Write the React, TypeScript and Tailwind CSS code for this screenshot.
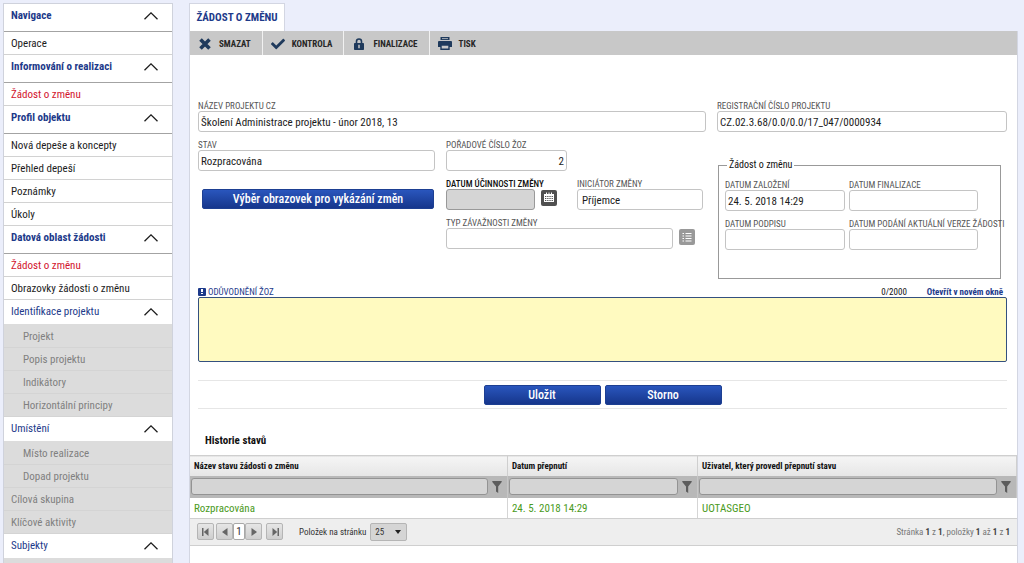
import { clsx } from "clsx"
import type { InputHTMLAttributes, ReactNode } from "react"
import { FaCheck } from "react-icons/fa"

type NavKind = "section" | "group" | "item" | "active" | "disabled" | "nested"

const navigation: { label: string; kind: NavKind }[] = [
  { label: "Navigace", kind: "section" },
  { label: "Operace", kind: "item" },
  { label: "Informování o realizaci", kind: "section" },
  { label: "Žádost o změnu", kind: "active" },
  { label: "Profil objektu", kind: "section" },
  { label: "Nová depeše a koncepty", kind: "item" },
  { label: "Přehled depeší", kind: "item" },
  { label: "Poznámky", kind: "item" },
  { label: "Úkoly", kind: "item" },
  { label: "Datová oblast žádosti", kind: "section" },
  { label: "Žádost o změnu", kind: "active" },
  { label: "Obrazovky žádosti o změnu", kind: "item" },
  { label: "Identifikace projektu", kind: "group" },
  { label: "Projekt", kind: "nested" },
  { label: "Popis projektu", kind: "nested" },
  { label: "Indikátory", kind: "nested" },
  { label: "Horizontální principy", kind: "nested" },
  { label: "Umístění", kind: "group" },
  { label: "Místo realizace", kind: "nested" },
  { label: "Dopad projektu", kind: "nested" },
  { label: "Cílová skupina", kind: "disabled" },
  { label: "Klíčové aktivity", kind: "disabled" },
  { label: "Subjekty", kind: "group" }
]

const navStyles: Record<NavKind, string> = {
  section: "h-7 border-[#a3a3a3] pt-px pb-1 font-bold text-[#1d3a8a]",
  group: "h-[25px] border-[#dcdcdc] text-[#1d3a8a]",
  item: "h-[23px] border-[#d2d2d2] pt-px text-[#1c1c1c]",
  active: "h-[23px] border-[#d2d2d2] pt-px text-[#d2142d]",
  disabled: "h-[23px] border-[#d4d4d4] bg-[#dcdcdc] pt-px text-[#808080]",
  nested: "h-[23px] border-[#d4d4d4] bg-[#dcdcdc] pt-px pl-[19px] text-[#808080]"
}

function Sidebar() {
  return (
    <nav className="flex w-[170px] shrink-0 flex-col border-x border-t border-[#cfd2dc] bg-white">
      {navigation.map((entry, i) => {
        const className = clsx("flex w-full items-center justify-between border-b pr-3.5 text-left", entry.kind !== "nested" && "pl-[7px]", navStyles[entry.kind])

        if (entry.kind === "section" || entry.kind === "group") {
          return (
            <button key={i} type="button" className={className}>
              {entry.label}
              <svg viewBox="0 0 14 8" className="h-2 w-3.5" fill="none" stroke="#1c1c1c" strokeWidth="1.3">
                <path d="M.5 7.3 7 .9l6.5 6.4" />
              </svg>
            </button>
          )
        }

        return <a key={i} href="#" className={className}>{entry.label}</a>
      })}
      <div className="flex-1 bg-[#dcdcdc]" />
    </nav>
  )
}

function ToolbarButton({ icon, children }: { icon: ReactNode; children: ReactNode }) {
  return (
    <button type="button" className="flex h-full items-center gap-[7px] border-r border-[#f1f1f1] pt-px pr-[11px] pl-2 text-[9px] font-bold text-[#262626] last:border-r-0">
      <span className="flex w-3.5 justify-center text-sm text-[#1f3a5c]">{icon}</span>
      {children}
    </button>
  )
}

function CrossIcon() {
  return (
    <svg viewBox="0 0 12 12" className="h-3 w-3" stroke="currentColor" strokeWidth="3.6">
      <path d="M1.5 1.5l9 9M10.5 1.5l-9 9" />
    </svg>
  )
}

function LockIcon() {
  return (
    <svg viewBox="0 0 10 12" className="h-3 w-2.5">
      <path d="M2.500 6V3.500a2.500 2.500 0 0 1 5 0V6" fill="none" stroke="currentColor" strokeWidth="1.600" />
      <rect y="5" width="10" height="7" rx=".8" fill="currentColor" />
      <path d="M5 6.700v3.600" stroke="#c8c8c8" strokeWidth="1.500" />
    </svg>
  )
}

function PrinterIcon() {
  return (
    <svg viewBox="0 0 14 13" className="h-[13px] w-3.5">
      <path d="M2.500 0h9v3h-9z" fill="currentColor" />
      <path d="M4 1.600h6" stroke="#c8c8c8" strokeWidth=".8" />
      <path d="M1 4h12a1 1 0 0 1 1 1v5h-3V8H3v2H0V5a1 1 0 0 1 1-1z" fill="currentColor" />
      <path d="M3 8h8v4.300H3z" fill="#c8c8c8" stroke="currentColor" strokeWidth="1.400" />
    </svg>
  )
}

function CalendarIcon() {
  return (
    <svg viewBox="0 0 16 16" className="h-full w-full">
      <path d="M3 4h10v8H3z" fill="#fff" />
      <path d="M5.500 2.500v2.500M8 2.500v2.500M10.500 2.500v2.500" stroke="#fff" />
      <path d="M4 6.500h8M4 8.500h8M4 10.500h8" stroke="#505050" strokeDasharray="1.300 .9" />
    </svg>
  )
}

function ListIcon() {
  return (
    <svg viewBox="0 0 16 16" className="h-full w-full" stroke="#fff" strokeWidth="1.2">
      <path d="M3.500 4.500H5M3.500 7H5M3.500 9.500H5M3.500 12H5M6.500 4.500h6M6.500 7h6M6.500 9.500h6M6.500 12h6" />
    </svg>
  )
}

function FilterIcon() {
  return (
    <svg viewBox="0 0 10 12" className="h-3 w-2.5" fill="#5c5c5c">
      <path d="M.3 0h9.400v1L6.200 5.500V12L4 10.500v-5L.3 1z" />
    </svg>
  )
}

interface FieldProps extends InputHTMLAttributes<HTMLInputElement> {
  id: string
  label: string
  dark?: boolean
  inputClass?: string
}

function Field({ id, label, dark, className, inputClass, ...props }: FieldProps) {
  return (
    <div className={className}>
      <label htmlFor={id} className={clsx("block pt-0.5 text-[9px] leading-[9px] whitespace-nowrap", dark ? "font-medium text-[#111]" : "text-[#555]")}>
        {label}
      </label>
      <input
        id={id}
        className={clsx("block h-[21px] w-full rounded-[3px] border px-0.5 pt-px text-[#1c1c1c]", dark ? "border-[#999] bg-[#d5d5d5]" : "border-[#c4c4c4] bg-white", inputClass)}
        {...props}
      />
    </div>
  )
}

function PrimaryButton({ className, children }: { className: string; children: ReactNode }) {
  return (
    <button type="button" className={clsx("h-5 rounded-[2px] border border-[#1d3f92] bg-linear-to-b from-[#2a56bd] to-[#16368c] text-xs leading-4 font-medium text-white", className)}>
      {children}
    </button>
  )
}

const columns = ["Název stavu žádosti o změnu", "Datum přepnutí", "Uživatel, který provedl přepnutí stavu"]

function PagerButton({ label, d, className }: { label: string; d: string; className?: string }) {
  return (
    <button type="button" aria-label={label} className={clsx("flex h-[17px] w-[17px] items-center justify-center rounded-[2px] border border-[#b5b5b5] bg-linear-to-b from-[#e6e6e6] to-[#cecece]", className)}>
      <svg viewBox="0 0 8 8" className="h-2 w-2" fill="#666"><path d={d} /></svg>
    </button>
  )
}

function History() {
  return (
    <section>
      <h2 className="mt-[23px] mb-[5px] pl-[15px] text-[11px] leading-[18px] font-bold">Historie stavů</h2>
      <table className="w-full table-fixed border-collapse text-left">
        <colgroup>
          <col className="w-[38.4%]" />
          <col className="w-[23%]" />
          <col />
        </colgroup>
        <thead>
          <tr className="h-5 border-t border-[#cfcfcf] bg-linear-to-b from-[#f5f5f5] to-[#e6e6e6]">
            {columns.map((column) => (
              <th key={column} className="border-r border-[#cfcfcf] px-1 py-0 text-[9px] leading-[18px] font-bold">{column}</th>
            ))}
          </tr>
          <tr className="bg-[#b8b8b8]">
            {columns.map((column) => (
              <td key={column} className="border-r border-[#c6c6c6] p-0">
                <div className="flex h-[22px] items-center gap-1 pr-[5px] pl-px">
                  <input aria-label={column} className="h-[17px] min-w-0 flex-1 rounded-[3px] border border-[#939393] bg-[#d5d5d5]" />
                  <button type="button" aria-label="Filtr"><FilterIcon /></button>
                </div>
              </td>
            ))}
          </tr>
        </thead>
        <tbody>
          <tr className="text-[#4a9a22]">
            {["Rozpracována", "24. 5. 2018 14:29", "UOTASGEO"].map((value) => (
              <td key={value} className="border-r border-[#d5d5d5] px-1 pt-0.5 pb-0 leading-[18px] last:border-r-0">{value}</td>
            ))}
          </tr>
        </tbody>
      </table>
      <div className="flex h-7 items-center border-y border-[#cfcfcf] bg-[#eee] px-[7px] text-[9px] text-[#333]">
        <PagerButton label="První" d="M0 0h1.500v8H0zM6.500 0v8L1.800 4z" />
        <PagerButton label="Předchozí" className="ml-0.5" d="M6.500 0v8L1 4z" />
        <button type="button" className="h-[17px] w-3 rounded-[2px] border border-[#a8a8a8] bg-white text-[11px] leading-[15px]">1</button>
        <PagerButton label="Další" d="M1.500 0v8L7 4z" />
        <PagerButton label="Poslední" className="ml-1" d="M6.500 0H8v8H6.500zM1.500 0v8l4.700-4z" />
        <label htmlFor="page-size" className="mr-1 ml-4">Položek na stránku</label>
        <div className="relative">
          <select id="page-size" className="block h-[18px] w-[37px] appearance-none rounded-[2px] border border-[#b5b5b5] bg-[#d5d5d5] pl-1 leading-4">
            <option>25</option>
          </select>
          <svg viewBox="0 0 6 4" className="pointer-events-none absolute top-[7px] right-1.5 h-1 w-1.5" fill="#222"><path d="M0 0h6L3 4z" /></svg>
        </div>
        <p className="ml-auto text-[#777]">
          Stránka <b className="text-[#444]">1</b> z <b className="text-[#444]">1</b>, položky <b className="text-[#444]">1</b> až <b className="text-[#444]">1</b> z <b className="text-[#444]">1</b>
        </p>
      </div>
    </section>
  )
}

export default function App() {
  return (
    <div className="flex h-screen gap-4 overflow-hidden bg-[#ebeefb] pt-[3px] pr-1.5 pl-[3px] font-['Roboto_Condensed','Liberation_Sans_Narrow',sans-serif] text-[11px] leading-4 text-[#111]">
      <Sidebar />

      <main className="flex min-w-0 flex-1 flex-col">
        <h1 className="h-7 w-24 shrink-0 border border-b-0 border-[#d3d6e2] bg-white text-center leading-7 font-bold text-[#1d3a8a]">
          ŽÁDOST O ZMĚNU
        </h1>
        <div className="flex-1 border-x border-[#d3d6e2] bg-white">
          <div className="flex h-6 bg-[#c8c8c8]">
            <ToolbarButton icon={<CrossIcon />}>SMAZAT</ToolbarButton>
            <ToolbarButton icon={<FaCheck />}>KONTROLA</ToolbarButton>
            <ToolbarButton icon={<LockIcon />}>FINALIZACE</ToolbarButton>
            <ToolbarButton icon={<PrinterIcon />}>TISK</ToolbarButton>
          </div>

          <form className="pt-[45px] pr-2.5 pl-2">
            <div className="grid grid-cols-[508fr_290fr] gap-x-[11px]">
              <div className="grid grid-cols-[237fr_260fr] content-start gap-x-[11px] gap-y-[7px]">
                <Field id="name" label="NÁZEV PROJEKTU CZ" className="col-span-2" defaultValue="Školení Administrace projektu - únor 2018, 13" />
                <Field id="state" label="STAV" defaultValue="Rozpracována" />
                <Field id="order" label="POŘADOVÉ ČÍSLO ŽOZ" className="w-[121px]" inputClass="text-right" defaultValue="2" />
                <div className="pt-[11px] pr-px pl-1">
                  <PrimaryButton className="w-full">Výběr obrazovek pro vykázání změn</PrimaryButton>
                </div>
                <div className="flex items-end">
                  <Field id="effective" label="DATUM ÚČINNOSTI ZMĚNY" dark className="w-[89px]" />
                  <button type="button" aria-label="Kalendář" className="mb-1 ml-1.5 h-4 w-4 rounded-[2px] bg-[#505050]"><CalendarIcon /></button>
                  <Field id="initiator" label="INICIÁTOR ZMĚNY" className="ml-5 w-[126px]" inputClass="pl-1" defaultValue="Příjemce" />
                </div>
                <div className="col-start-2 flex items-end">
                  <Field id="severity" label="TYP ZÁVAŽNOSTI ZMĚNY" className="w-[227px]" />
                  <button type="button" aria-label="Seznam" className="mb-1 ml-1.5 h-4 w-4 rounded-[2px] bg-[#999]"><ListIcon /></button>
                </div>
              </div>

              <div>
                <Field id="reg" label="REGISTRAČNÍ ČÍSLO PROJEKTU" defaultValue="CZ.02.3.68/0.0/0.0/17_047/0000934" />
                <fieldset className="mt-[27px] mr-1.5 ml-px border border-[#999] px-1.5 pt-2 pb-7">
                  <legend className="ml-0.5 px-0.5 text-[10px] leading-3">Žádost o změnu</legend>
                  <div className="grid grid-cols-[120px_129px] gap-x-1 gap-y-[7px]">
                    <Field id="created" label="DATUM ZALOŽENÍ" defaultValue="24. 5. 2018 14:29" />
                    <Field id="finalized" label="DATUM FINALIZACE" />
                    <Field id="signed" label="DATUM PODPISU" />
                    <Field id="submitted" label="DATUM PODÁNÍ AKTUÁLNÍ VERZE ŽÁDOSTI" />
                  </div>
                </fieldset>
              </div>
            </div>

            <div className="mt-1.5 flex h-3 items-center pt-px text-[9px]">
              <span className="mr-0.5 flex h-2 w-2 flex-col items-center justify-center gap-px rounded-[1px] bg-[#1d3a8a]">
                <span className="h-[3px] w-0.5 bg-white" />
                <span className="h-px w-0.5 bg-white" />
              </span>
              <label htmlFor="reason" className="text-[#1d3a8a]">ODŮVODNĚNÍ ŽOZ</label>
              <span className="ml-auto">0/2000</span>
              <a href="#" className="ml-5 pr-1 font-bold text-[#1d3a8a]">Otevřít v novém okně</a>
            </div>
            <textarea id="reason" className="block h-[65px] w-full resize-none rounded-[2px] border border-[#34507f] bg-[#fffac0] px-0.5" />

            <div className="mt-[18px] flex h-[29px] items-center justify-center gap-1 border-y border-[#e6e6e6]">
              <PrimaryButton className="w-[117px]">Uložit</PrimaryButton>
              <PrimaryButton className="w-[117px]">Storno</PrimaryButton>
            </div>
          </form>

          <History />
        </div>
      </main>
    </div>
  )
}
